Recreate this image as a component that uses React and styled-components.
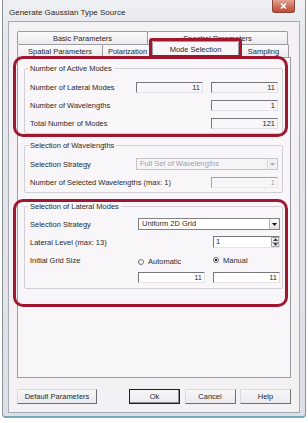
import React from 'react';
import styled, { createGlobalStyle } from 'styled-components';

const GlobalStyle = createGlobalStyle`
  body {
    margin:0;
    background:#fff;
    font-family:"Liberation Sans", Arial, sans-serif;
  }
`

const Window = styled.div`
  position:relative;
  box-sizing:border-box;
  margin-left:2px;
  width:304px;
  height:418px;
  border:1px solid #8b929c;
  border-top:none;
  border-bottom:2px solid #79a8bf;
  border-radius:0 0 4px 4px;
  background:linear-gradient(#eff0f3, #e6e8ec 30px, #dde0e6);
  padding:0 5px 3px;
  display:flex;
  flex-direction:column;
`
const TitleBar = styled.div`
  height:21px;
  display:flex;
  align-items:flex-start;
`
const Title = styled.div`
  padding:8px 0 0 1px;
  font-size:8px;
  line-height:9px;
  color:#2a2a2a;
`
const CloseButton = styled.div`
  box-sizing:border-box;
  margin:0 5px 0 auto;
  width:23px;
  height:13px;
  border:1px solid #8e4538;
  border-top:none;
  border-radius:0 0 3px 3px;
  background:linear-gradient(#e2a595, #cd6d59 55%, #bb4e3b);
  display:flex;
  align-items:center;
  justify-content:center;
`
const Client = styled.div`
  flex:1;
  border:1px solid #a7abb3;
  background:#f4f1f4;
  padding:9px 8px 0;
  display:flex;
  flex-direction:column;
`
const TabRow = styled.div`
  display:flex;
  align-items:flex-end;
  height:13px;
`
const Tab = styled.div`
  box-sizing:border-box;
  position:relative;
  z-index:${p => p.$active ? 2 : 0};
  width:${p => p.$w}px;
  height:${p => p.$active ? 17 : 13}px;
  margin-bottom:${p => p.$active ? -1 : 0}px;
  display:flex;
  align-items:center;
  justify-content:center;
  padding-bottom:${p => p.$active ? 2 : 0}px;
  border:1px solid #9d9ca2;
  border-bottom:none;
  border-radius:2px 2px 0 0;
  background:${p => p.$active ? '#f8f6f8' : 'linear-gradient(#fbfafb, #eceaed)'};
  font-size:7.5px;
  color:#2a2a2a;
  white-space:nowrap;
  overflow:hidden;
  & + & { margin-left:-1px; }
`
const Panel = styled.div`
  position:relative;
  z-index:1;
  box-sizing:border-box;
  height:321px;
  border:1px solid #9d9ca2;
  background:#f8f6f8;
  padding:5px 7px 0 6px;
  display:flex;
  flex-direction:column;
`
const Group = styled.fieldset`
  margin:${p => p.$mt}px 0 0;
  padding:${p => p.$pt}px ${p => p.$pr || 4}px ${p => p.$pb}px 5px;
  border:1px solid #d3d0d5;
  border-radius:2px;
  min-width:0;
`
const Legend = styled.legend`
  margin-left:-2px;
  padding:0 2px;
  font-size:7.5px;
  line-height:9px;
  color:#2a2a2a;
`
const Grid = styled.div`
  display:grid;
  grid-template-columns:minmax(0, 1fr) 67px 67px;
  column-gap:8px;
  row-gap:${p => p.$gap || 7}px;
  align-items:center;
`
const Label = styled.div`
  font-size:7.5px;
  line-height:9px;
  color:#2a2a2a;
  white-space:nowrap;
`
const Field = styled.div`
  box-sizing:border-box;
  grid-column:${p => p.$col || 'auto'};
  height:11px;
  border:1px solid;
  border-color:${p => p.$dim ? '#a6a5a9 #e9e7ea #e9e7ea #a6a5a9' : '#77767a #e4e2e6 #e4e2e6 #77767a'};
  background:${p => p.$white ? '#fff' : 'transparent'};
  padding:0 2px;
  font-size:7.5px;
  line-height:9px;
  text-align:right;
  color:${p => p.$dim ? '#a3a1a5' : '#2a2a2a'};
`
const Combo = styled.div`
  box-sizing:border-box;
  grid-column:2 / span 2;
  height:12px;
  display:flex;
  align-items:stretch;
  border:1px solid ${p => p.$disabled ? '#c6c4c8' : '#828185'};
  background:${p => p.$disabled ? '#f6f4f6' : '#fff'};
  font-size:7.5px;
  line-height:10px;
  color:${p => p.$disabled ? '#a4a2a6' : '#2a2a2a'};
  padding-left:3px;
`
const ComboButton = styled.div`
  margin-left:auto;
  width:9px;
  display:flex;
  align-items:center;
  justify-content:center;
  border-left:1px solid ${p => p.$disabled ? '#dcdadd' : '#b9b8bc'};
  background:${p => p.$disabled ? '#f1eff1' : 'linear-gradient(#fbfbfb, #e3e2e5)'};
`
const Spin = styled.div`
  box-sizing:border-box;
  grid-column:3;
  height:12px;
  display:flex;
  border:1px solid;
  border-color:#77767a #e4e2e6 #e4e2e6 #77767a;
  background:#fff;
  font-size:7.5px;
  line-height:10px;
  color:#2a2a2a;
  padding-left:2px;
`
const SpinButtons = styled.div`
  margin-left:auto;
  width:8px;
  display:flex;
  flex-direction:column;
`
const SpinButton = styled.div`
  flex:1;
  display:flex;
  align-items:center;
  justify-content:center;
  border:1px solid #a8a7ab;
  background:linear-gradient(#fbfbfb, #e6e5e8);
  & + & { border-top:none; }
`
const RadioItem = styled.div`
  display:flex;
  align-items:center;
  gap:4px;
  padding-top:${p => p.$drop || 0}px;
  font-size:7.5px;
  line-height:9px;
  color:#2a2a2a;
`
const RadioDot = styled.span`
  box-sizing:border-box;
  width:6px;
  height:6px;
  border-radius:50%;
  border:1px solid #707074;
  background:${p => p.$on ? 'radial-gradient(circle, #222 0 1.3px, #fff 1.6px)' : '#fff'};
`
const ButtonRow = styled.div`
  display:flex;
  margin-top:11px;
`
const ActionGroup = styled.div`
  display:flex;
  gap:4.5px;
  margin-left:auto;
`
const Btn = styled.button`
  box-sizing:border-box;
  width:${p => p.$w}px;
  height:15px;
  padding:0;
  font-family:inherit;
  font-size:7.5px;
  color:#2a2a2a;
  background:linear-gradient(#f8f7f8, #ebe9ec);
  border:1px solid;
  border-color:${p => p.$primary ? '#202020' : '#dcdadd #6e6d72 #6e6d72 #dcdadd'};
  box-shadow:${p => p.$primary ? 'inset -1px -1px 0 #8d8c90' : 'none'};
`
const Mark = styled.div`
  position:absolute;
  left:${p => p.$x}px;
  top:${p => p.$y}px;
  width:${p => p.$w}px;
  height:${p => p.$h}px;
  box-sizing:border-box;
  border:3.5px solid #a0182f;
  border-radius:${p => p.$r}px;
  pointer-events:none;
  z-index:5;
`

const Arrow = ({ up, color = '#111' }) => (
  <svg width="5" height="3" viewBox="0 0 5 3">
    <path d={up ? 'M0 3 L2.5 0 L5 3 Z' : 'M0 0 L5 0 L2.5 3 Z'} fill={color} />
  </svg>
)

const App = () => {
  return (
    <>
      <GlobalStyle />
      <Window>
        <TitleBar>
          <Title>Generate Gaussian Type Source</Title>
          <CloseButton>
            <svg width="7" height="6" viewBox="0 0 7 6">
              <path d="M1 0.5 L6 5.5 M6 0.5 L1 5.5" stroke="#fff" strokeWidth="1.6" />
            </svg>
          </CloseButton>
        </TitleBar>
        <Client>
          <TabRow>
            <Tab $w={131}>Basic Parameters</Tab>
            <Tab $w={141}>Spectral Parameters</Tab>
          </TabRow>
          <TabRow>
            <Tab $w={86}>Spatial Parameters</Tab>
            <Tab $w={51}>Polarization</Tab>
            <Tab $w={87} $active>Mode Selection</Tab>
            <Tab $w={51}>Sampling</Tab>
          </TabRow>
          <Panel>
            <Group $mt={1} $pt={9} $pb={4}>
              <Legend>Number of Active Modes</Legend>
              <Grid>
                <Label>Number of Lateral Modes</Label>
                <Field>11</Field>
                <Field>11</Field>
                <Label>Number of Wavelengths</Label>
                <Field $col={3}>1</Field>
                <Label>Total Number of Modes</Label>
                <Field $col={3}>121</Field>
              </Grid>
            </Group>
            <Group $mt={7} $pt={8} $pb={4}>
              <Legend>Selection of Wavelengths</Legend>
              <Grid>
                <Label>Selection Strategy</Label>
                <Combo $disabled>
                  Full Set of Wavelengths
                  <ComboButton $disabled><Arrow color="#b0aeb2" /></ComboButton>
                </Combo>
                <Label>Number of Selected Wavelengths (max: 1)</Label>
                <Field $col={3} $dim>1</Field>
              </Grid>
            </Group>
            <Group $mt={9} $pt={7} $pb={5} $pr={2}>
              <Legend>Selection of Lateral Modes</Legend>
              <Grid $gap={6}>
                <Label>Selection Strategy</Label>
                <Combo>
                  Uniform 2D Grid
                  <ComboButton><Arrow /></ComboButton>
                </Combo>
                <Label>Lateral Level (max: 13)</Label>
                <Spin>
                  1
                  <SpinButtons>
                    <SpinButton><Arrow up color="#444" /></SpinButton>
                    <SpinButton><Arrow color="#444" /></SpinButton>
                  </SpinButtons>
                </Spin>
                <Label>Initial Grid Size</Label>
                <RadioItem $drop={3}><RadioDot />Automatic</RadioItem>
                <RadioItem><RadioDot $on />Manual</RadioItem>
                <Field $col={2} $white>11</Field>
                <Field $col={3} $white>11</Field>
              </Grid>
            </Group>
          </Panel>
          <ButtonRow>
            <Btn $w={80}>Default Parameters</Btn>
            <ActionGroup>
              <Btn $w={51} $primary>Ok</Btn>
              <Btn $w={51}>Cancel</Btn>
              <Btn $w={51}>Help</Btn>
            </ActionGroup>
          </ButtonRow>
        </Client>
        <Mark $x={146} $y={38} $w={93} $h={20} $r={3} />
        <Mark $x={10} $y={56} $w={275} $h={81} $r={10} />
        <Mark $x={10} $y={199} $w={275} $h={108} $r={10} />
      </Window>
    </>
  )
}

export default App
